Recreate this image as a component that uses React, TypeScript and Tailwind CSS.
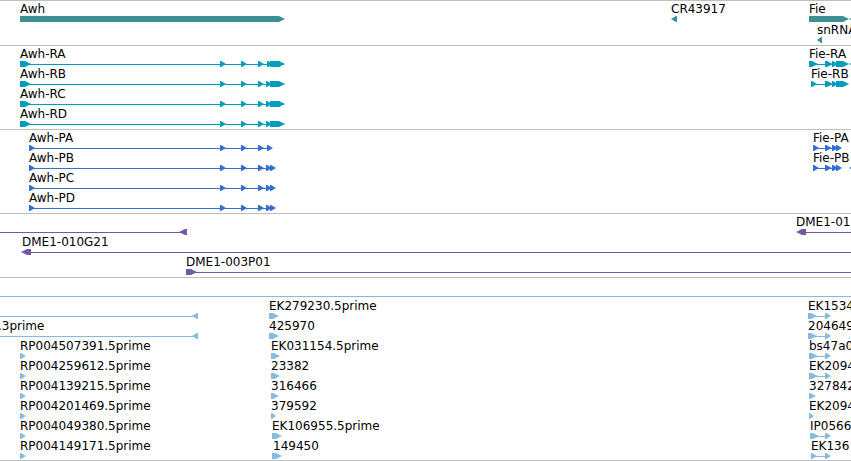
type Dir = 'right' | 'left';

/** A block with a pointed end: [start, end, direction]. */
type Block = [number, number, Dir?];

interface Feature {
  label?: string;
  /** Where the label starts, when it is not the first block's start. */
  labelAt?: number;
  blocks: Block[];
  /** Connecting line; an end of null runs off the right edge. */
  line?: [number, number | null];
}

interface TrackData {
  name: string;
  color: string;
  spacing: string;
  rows: Feature[][];
}

const awhRna = (label: string, smallExon: number): Feature => ({
  label,
  line: [20, 284],
  blocks: [[20, 31], [220, 226], [241, 247], [258, 264], [smallExon, smallExon + 6], [270, 285]],
});

const awhProtein = (label: string, tail: Block[]): Feature => ({
  label,
  line: [29, 270],
  blocks: [[29, 35], [220, 226], [241, 247], [258, 264], ...tail],
});

const fieProtein = (label: string): Feature => ({
  label,
  line: [813, 838],
  blocks: [[813, 819], [825, 832], [832, 838], [836, 842]],
});

const spliced = (label: string, start: number, end: number): Feature => ({
  label,
  line: [start, 826],
  blocks: [[start, end], [825, 831]],
});

const single = (label: string, start: number, end: number): Feature => ({
  label,
  blocks: [[start, end]],
});

const edge: Feature = { blocks: [[849, 856, 'left']] };

const proteinTail: Block[] = [[266, 272], [270, 276]];

const tracks: TrackData[] = [
  {
    name: 'Genes',
    color: 'text-[#3d8f94]',
    spacing: 'gap-px pb-[3px]',
    rows: [
      [
        single('Awh', 20, 285),
        { label: 'CR43917', blocks: [[671, 677, 'left']] },
        single('Fie', 809, 849),
        edge,
      ],
      [{ label: 'snRNA:U', blocks: [[817, 822, 'left']] }],
    ],
  },
  {
    name: 'Transcripts',
    color: 'text-[#009dbf]',
    spacing: 'pb-[3px]',
    rows: [
      [
        awhRna('Awh-RA', 267),
        {
          label: 'Fie-RA',
          line: [809, 838],
          blocks: [[809, 818], [825, 833], [832, 838], [836, 849]],
        },
        edge,
      ],
      [
        awhRna('Awh-RB', 266),
        {
          label: 'Fie-RB',
          line: [811, 838],
          blocks: [[811, 817], [825, 833], [832, 838], [836, 849]],
        },
      ],
      [awhRna('Awh-RC', 266)],
      [awhRna('Awh-RD', 266)],
    ],
  },
  {
    name: 'Proteins',
    color: 'text-[#326fd0]',
    spacing: 'pb-[3px]',
    rows: [
      [awhProtein('Awh-PA', [[267, 273]]), fieProtein('Fie-PA')],
      [awhProtein('Awh-PB', proteinTail), fieProtein('Fie-PB'), edge],
      [awhProtein('Awh-PC', proteinTail)],
      [awhProtein('Awh-PD', proteinTail)],
    ],
  },
  {
    name: 'Clones',
    color: 'text-[#7557a8]',
    spacing: 'pb-[3px]',
    rows: [
      [
        { line: [0, 182], blocks: [[179, 187, 'left']] },
        { label: 'DME1-01', line: [800, null], blocks: [[796, 806, 'left']] },
      ],
      [{ label: 'DME1-010G21', labelAt: 22, line: [25, null], blocks: [[21, 31, 'left']] }],
      [{ label: 'DME1-003P01', line: [190, null], blocks: [[186, 197]] }],
    ],
  },
  {
    name: 'cDNA and EST alignments',
    color: 'text-[#87bbdd]',
    spacing: 'pb-[2px]',
    rows: [
      [{ line: [0, null], blocks: [] }],
      [
        { line: [0, 194], blocks: [[192, 198, 'left']] },
        single('EK279230.5prime', 269, 279),
        spliced('EK1534', 808, 817),
      ],
      [
        { label: '.3prime', labelAt: -2, line: [0, 194], blocks: [[192, 198, 'left']] },
        single('425970', 269, 279),
        spliced('204649', 808, 817),
      ],
      [
        single('RP004507391.5prime', 20, 26),
        single('EK031154.5prime', 271, 280),
        spliced('bs47a0', 809, 818),
      ],
      [
        single('RP004259612.5prime', 20, 26),
        single('23382', 271, 280),
        spliced('EK2094', 809, 818),
      ],
      [
        single('RP004139215.5prime', 20, 26),
        single('316466', 271, 279),
        single('327842', 809, 816),
      ],
      [
        single('RP004201469.5prime', 20, 26),
        single('379592', 271, 276),
        single('EK2094', 809, 814),
      ],
      [
        single('RP004049380.5prime', 20, 26),
        single('EK106955.5prime', 272, 282),
        spliced('IP0566', 810, 819),
      ],
      [
        single('RP004149171.5prime', 20, 26),
        { label: '149450', labelAt: 273, blocks: [[272, 282]] },
        spliced('EK136', 811, 817),
      ],
    ],
  },
];

/** Short blocks are plain triangles; longer ones get a body and a rounded-off point. */
function blockPoints([start, end, dir = 'right']: Block): string {
  const base = dir === 'right' ? start : end;
  const tip = dir === 'right' ? end : start;
  const sign = dir === 'right' ? 1 : -1;
  if (end - start < 7) {
    return `${base},0 ${base + sign},0 ${tip},3 ${base + sign},6 ${base},6`;
  }
  const shoulder = tip - 6 * sign;
  const cheek = tip - 4 * sign;
  return `${base},0 ${shoulder},0 ${cheek},1 ${tip},3 ${cheek},5 ${shoulder},6 ${base},6`;
}

function Glyph({ feature }: { feature: Feature }) {
  const { line, blocks } = feature;
  return (
    <g>
      {line && (
        <line
          x1={line[0]}
          x2={line[1] ?? '100%'}
          y1="3.5"
          y2="3.5"
          stroke="currentColor"
          shapeRendering="crispEdges"
        />
      )}
      {blocks.map((block, i) => (
        <polygon key={i} points={blockPoints(block)} fill="currentColor" />
      ))}
    </g>
  );
}

function Row({ features }: { features: Feature[] }) {
  return (
    <li className="h-5">
      <div className="grid h-[15px] grid-cols-1 grid-rows-1">
        {features.map(
          (feature, i) =>
            feature.label && (
              <span
                key={i}
                className="col-start-1 row-start-1 justify-self-start whitespace-nowrap text-black"
                style={{ marginLeft: feature.labelAt ?? feature.blocks[0][0] }}
              >
                {feature.label}
              </span>
            ),
        )}
      </div>
      <svg className="block h-[5px] w-full overflow-visible" aria-hidden="true">
        {features.map((feature, i) => (
          <Glyph key={i} feature={feature} />
        ))}
      </svg>
    </li>
  );
}

export default function App() {
  return (
    <main className="overflow-hidden border-b border-[#bfbfbf] bg-white font-['DejaVu_Sans',sans-serif] text-xs leading-4">
      {tracks.map((track) => (
        <section key={track.name} aria-label={track.name} className="border-t border-[#bfbfbf]">
          <ul className={`flex flex-col ${track.spacing} ${track.color}`}>
            {track.rows.map((features, i) => (
              <Row key={i} features={features} />
            ))}
          </ul>
        </section>
      ))}
    </main>
  );
}
